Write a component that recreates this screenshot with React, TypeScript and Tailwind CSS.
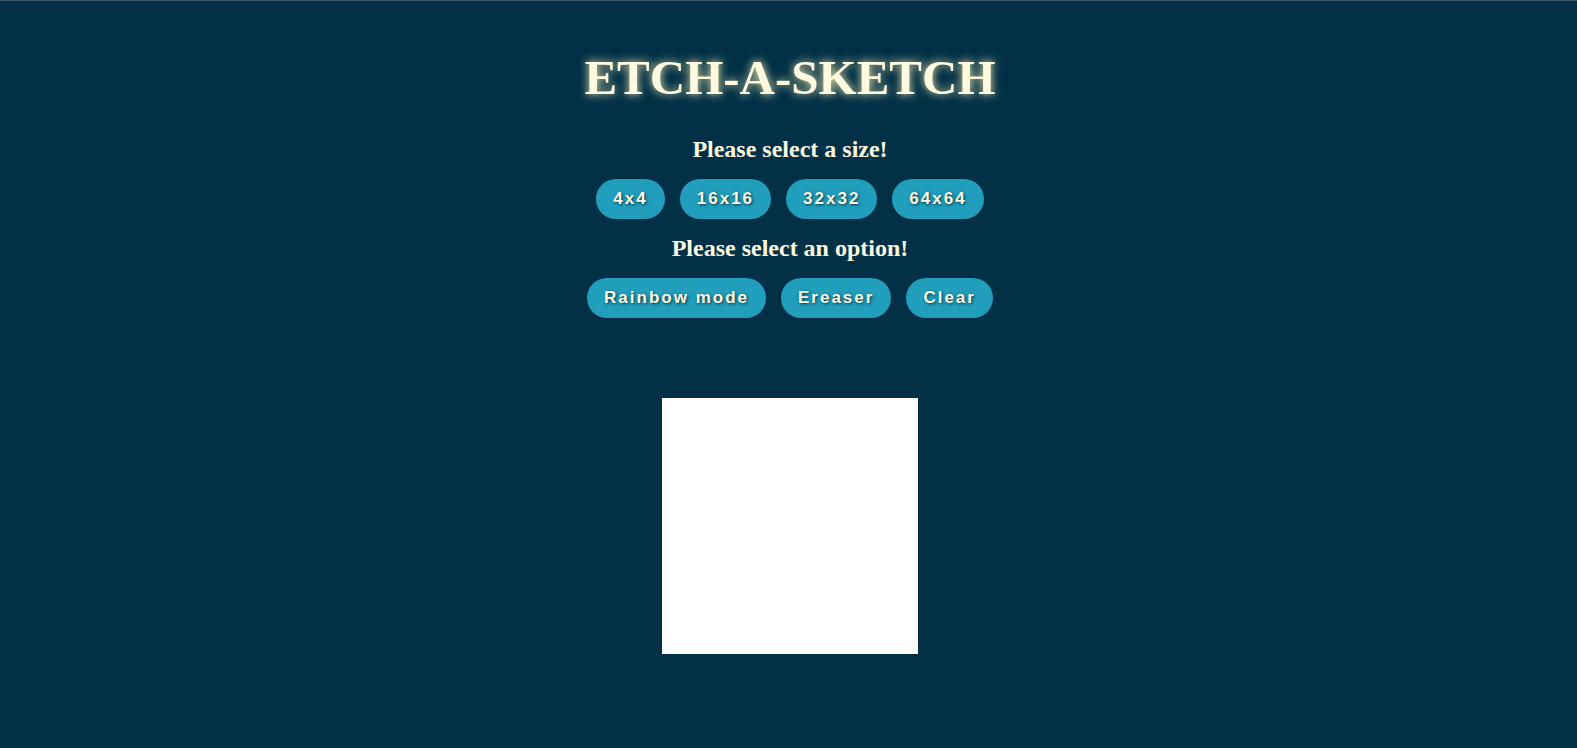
import { useState } from "react";

const sizes = [4, 16, 32, 64];

const btn =
  "h-10 rounded-full bg-[#219ebc] px-[17px] text-[17px] font-bold tracking-[2px] text-[#fefae0] [font-family:'Liberation_Sans',Arial,sans-serif] [text-shadow:1px_1px_3px_#023047]";

export default function App() {
  const [size, setSize] = useState(16);
  const [mode, setMode] = useState("black");
  const [cells, setCells] = useState<Record<number, string>>({});

  const paint = (i: number) => {
    if (mode === "ereaser") {
      setCells((prev) => ({ ...prev, [i]: "white" }));
      return;
    }
    const color =
      mode === "rainbow" ? `hsl(${Math.floor(Math.random() * 360)}, 80%, 55%)` : "black";
    setCells((prev) => ({ ...prev, [i]: color }));
  };

  const pickSize = (n: number) => {
    setSize(n);
    setCells({});
  };

  return (
    <div className="min-h-[748px] border-t border-[#3d5563] bg-[#023047] text-[#fefae0] [font-family:'Liberation_Serif','Times_New_Roman',serif]">
      <div className="flex flex-col items-center pl-[3px]">
        <h1 className="mt-[45px] text-[49px] leading-[64px] font-bold [text-shadow:0_0_10px_#fff3b0]">
          ETCH-A-SKETCH
        </h1>
        <h2 className="mt-[25px] text-[24px] leading-[28px] font-bold">Please select a size!</h2>
        <div className="mt-4 flex gap-[15px]">
          {sizes.map((n) => (
            <button key={n} className={btn} onClick={() => pickSize(n)}>
              {n}x{n}
            </button>
          ))}
        </div>
        <h2 className="mt-[15px] text-[24px] leading-[28px] font-bold">Please select an option!</h2>
        <div className="mt-4 flex gap-[15px]">
          <button className={btn} onClick={() => setMode("rainbow")}>
            Rainbow mode
          </button>
          <button className={btn} onClick={() => setMode("ereaser")}>
            Ereaser
          </button>
          <button className={btn} onClick={() => setCells({})}>
            Clear
          </button>
        </div>
        <div
          className="mt-20 grid h-64 w-64 bg-white"
          style={{ gridTemplateColumns: `repeat(${size}, 1fr)` }}
        >
          {Array.from({ length: size * size }).map((_, i) => (
            <div key={i} onMouseEnter={() => paint(i)} style={{ background: cells[i] }} />
          ))}
        </div>
      </div>
    </div>
  );
}
